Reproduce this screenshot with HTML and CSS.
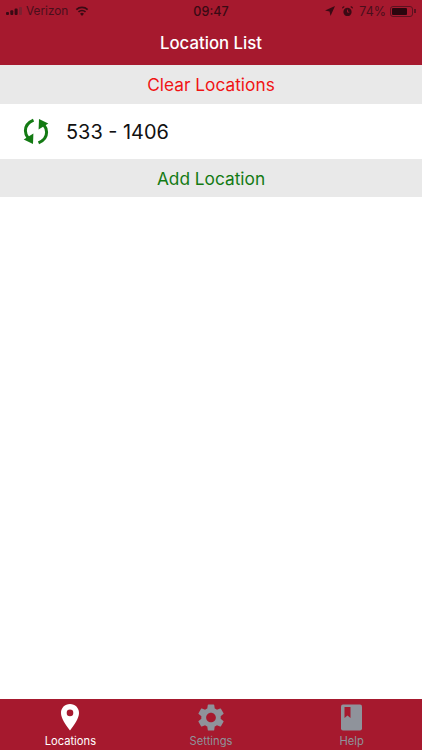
FILE: index.html
```html
<!DOCTYPE html>
<html lang="en">
<head>
<meta charset="utf-8">
<title>Location List</title>
<link rel="stylesheet" href="styles.css">
</head>
<body>
<div class="app">
  <header class="header">
    <div class="status">
      <div class="status-left">
        <svg class="signal" width="16" height="8" viewBox="0 0 16 8"><rect x="0" y="5" width="3" height="3" rx="1" fill="#3a0a14"/><rect x="4.300" y="3.300" width="3" height="4.700" rx="1" fill="#3a0a14"/><rect x="8.600" y="1.500" width="3" height="6.500" rx="1" fill="#3a0a14"/><rect x="13" y="0" width="3" height="8" rx="1" fill="#7d2030"/></svg>
        <span class="carrier">Verizon</span>
        <svg class="wifi" width="14" height="10" viewBox="0 0 16 12"><path d="M8 12 5.600 9.200a3.500 3.500 0 0 1 4.800 0Z" fill="#3a0a14"/><path d="M4.400 7.900 3.100 6.400a7.400 7.400 0 0 1 9.800 0L11.600 7.900a5.400 5.400 0 0 0-7.200 0Z" fill="#3a0a14"/><path d="M1.900 5 .5 3.500a11.200 11.200 0 0 1 15 0L14.100 5a9.200 9.200 0 0 0-12.200 0Z" fill="#3a0a14"/></svg>
      </div>
      <span class="time">09:47</span>
      <div class="status-right">
        <svg class="arrow" width="10" height="10" viewBox="0 0 11 11"><path d="M11 0 0 4.900l5 1.100 1.100 5Z" fill="#3a0a14"/></svg>
        <svg class="alarm" width="11" height="11" viewBox="0 0 12 12"><circle cx="6" cy="6.500" r="4.500" fill="#3a0a14"/><path d="M6 4v2.700h2" stroke="#a6192e" fill="none"/><path d="M.4 3 3 .7 1.600.2.200 1.400ZM11.600 3 9 .7l1.400-.5 1.400 1.200Z" fill="#3a0a14"/></svg>
        <span class="battery-text">74%</span>
        <div class="battery"><div class="battery-fill"></div></div>
        <div class="battery-tip"></div>
      </div>
    </div>
    <h1 class="title">Location List</h1>
  </header>

  <main class="content">
    <div class="action action-clear">Clear Locations</div>
    <div class="row">
      <svg class="sync" width="26" height="27" viewBox="0 0 26 27">
        <g id="half">
          <path d="M10.500 2.200C5 4.500 2.400 8.500 2.400 12.800c0 2.700.9 5 2.700 7.200" fill="none" stroke="#137a13" stroke-width="3"/>
          <path d="M.7 21.500 10 26l.4-10.500Z" fill="#137a13"/>
        </g>
        <g transform="rotate(180 13 13.500)">
          <path d="M10.500 2.200C5 4.500 2.400 8.500 2.400 12.800c0 2.700.9 5 2.700 7.200" fill="none" stroke="#137a13" stroke-width="3"/>
          <path d="M.7 21.500 10 26l.4-10.500Z" fill="#137a13"/>
        </g>
      </svg>
      <span class="row-label">533 - 1406</span>
    </div>
    <div class="action action-add">Add Location</div>
  </main>

  <nav class="tabs">
    <div class="tab tab-active">
      <svg width="18" height="27" viewBox="0 0 18 27"><path fill-rule="evenodd" d="M9 0c5.200 0 9 3.900 9 8.900C18 14 13.500 20.500 9 26.500 4.500 20.500 0 14 0 8.900 0 3.900 3.800 0 9 0Zm0 5.600a3.300 3.300 0 1 0 0 6.600 3.300 3.300 0 0 0 0-6.600Z" fill="#fff"/></svg>
      <span>Locations</span>
    </div>
    <div class="tab">
      <svg width="26" height="27" viewBox="2.400 2 19.200 20"><path fill-rule="evenodd" d="M19.140 12.940c.04-.3.06-.61.06-.94 0-.32-.02-.64-.07-.94l2.030-1.580a.49.49 0 0 0 .12-.61l-1.920-3.320a.488.488 0 0 0-.59-.22l-2.390.96c-.5-.38-1.030-.7-1.620-.94l-.36-2.540a.484.484 0 0 0-.48-.41h-3.840c-.24 0-.43.17-.47.41l-.36 2.540c-.59.24-1.130.57-1.620.94l-2.390-.96c-.22-.08-.47 0-.59.22L2.740 8.870c-.12.21-.08.47.12.61l2.030 1.580c-.05.3-.09.63-.09.94s.02.64.07.94l-2.030 1.580a.49.49 0 0 0-.12.61l1.920 3.320c.12.22.37.29.59.22l2.390-.96c.5.38 1.030.7 1.620.94l.36 2.540c.05.24.24.41.48.41h3.840c.24 0 .44-.17.47-.41l.36-2.540c.59-.24 1.130-.56 1.620-.94l2.390.96c.22.08.47 0 .59-.22l1.920-3.320c.12-.22.07-.47-.12-.61l-2.010-1.580zM12 15.600c-1.980 0-3.600-1.620-3.600-3.600s1.620-3.600 3.600-3.600 3.600 1.620 3.600 3.600-1.620 3.600-3.600 3.600z" fill="#8f939b"/></svg>
      <span>Settings</span>
    </div>
    <div class="tab">
      <svg width="21" height="26" viewBox="0 0 21 26"><rect x="0" y="0" width="21" height="26" rx="2" fill="#8f939b"/><path d="M3.500 2.500h6v11l-3-2.400-3 2.400Z" fill="#a6192e"/></svg>
      <span>Help</span>
    </div>
  </nav>
</div>
</body>
</html>
```
FILE: styles.css
```css
* { box-sizing: border-box; }
html, body { margin: 0; padding: 0; }
body { width: 422px; height: 750px; overflow: hidden; background: #fff; font-family: "Inter", "Liberation Sans", sans-serif; }
.app { display: flex; flex-direction: column; height: 750px; }
.header { height: 65px; background: #a6192e; display: flex; flex-direction: column; flex: none; }
.status { height: 22px; display: flex; align-items: center; justify-content: space-between; padding: 0 6.500px 0 6px; position: relative; color: #3a0a14; font-size: 11.800px; }
.status-left, .status-right { display: flex; align-items: center; }
.signal { margin-right: 4px; }
.carrier { color: #4a0f1c; }
.wifi { margin-left: 7px; }
.time { font-weight: 500; font-size: 12.600px; position: absolute; left: 0; right: 0; text-align: center; }
.arrow { margin-right: 7px; }
.alarm { margin-right: 6px; }
.battery-text { color: #4a0f1c; margin-right: 4px; font-size: 12.500px; }
.battery { width: 23px; height: 11px; border: 1px solid #5c1220; border-radius: 3px; padding: 1px; }
.battery-fill { width: 15px; height: 7px; background: #2a060e; border-radius: 1px; }
.battery-tip { width: 1.500px; height: 4px; background: #5c1220; margin-left: 1px; }
.title { margin: 0; color: #fff; font-size: 16.800px; font-weight: 500; line-height: 43px; text-align: center; }
.content { flex: 1; display: flex; flex-direction: column; }
.action { height: 39px; background: #e9e9e9; display: flex; align-items: center; justify-content: center; font-size: 17.300px; }
.action-clear { color: #f01414; }
.action-add { height: 38px; color: #137a13; }
.row { height: 55px; display: flex; align-items: center; padding-left: 23px; background: #fff; }
.sync { margin-right: 17px; }
.row-label { font-size: 19.900px; color: #111; }
.tabs { height: 51px; flex: none; background: #a6192e; display: flex; }
.tab { flex: 1; display: flex; flex-direction: column; align-items: center; color: #8f939b; font-size: 11.200px; padding-top: 5px; }
.tab svg { display: block; height: 27px; }
.tab span { line-height: 14px; margin-top: 3px; }
.tab-active { color: #fff; }
```
